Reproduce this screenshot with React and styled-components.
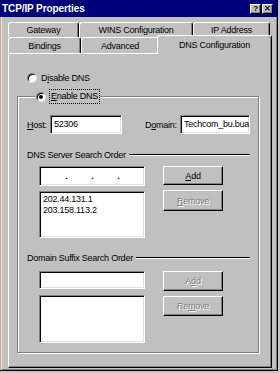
import React from 'react'
import styled, { createGlobalStyle } from 'styled-components'

const FONT = `"Liberation Sans", Arial, sans-serif`

const GlobalStyle = createGlobalStyle`
  html, body {
    margin: 0;
    padding: 0;
    background: #c8c8c8;
  }
  body {
    font-family: ${FONT};
    font-size: 9px;
    letter-spacing: -0.25px;
    color: #000;
  }
`

const Frame = styled.div`
  width: 278px;
  height: 371px;
  box-sizing: border-box;
  background: #c0c0c0;
  border-right: 1px solid #000;
  border-bottom: 1px solid #000;
  box-shadow: inset -1px -1px 0 #808080;
  display: flex;
  flex-direction: column;
  overflow: hidden;
`

const TitleBar = styled.div`
  height: 17px;
  background: #00007b;
  display: flex;
  align-items: center;
  padding: 0 4px 0 2px;
  flex-shrink: 0;
`

const Title = styled.div`
  flex: 1;
  color: #fff;
  font-weight: bold;
  font-size: 10px;
  letter-spacing: -0.1px;
`

const CapButton = styled.div`
  width: 11px;
  height: 10px;
  box-sizing: border-box;
  background: #c0c0c0;
  border: 1px solid;
  border-color: #fff #000 #000 #fff;
  box-shadow: inset -1px -1px 0 #808080;
  display: flex;
  align-items: center;
  justify-content: center;
  font-weight: bold;
  font-size: 8px;
  line-height: 1;
  margin-left: ${p => p.$gap || 0}px;
`

const Body = styled.div`
  flex: 1;
  border-left: 1px solid #d4a090;
  box-shadow: inset 1px 0 0 #e8e8e8;
  padding: 5px 5px 0 7px;
  display: flex;
  flex-direction: column;
`

const TabRow = styled.div`
  display: flex;
  height: ${p => p.$h}px;
`

const Tab = styled.div`
  box-sizing: border-box;
  width: ${p => p.$w}px;
  height: ${p => p.$h}px;
  background: #c0c0c0;
  border-top: 1px solid #fff;
  border-left: 1px solid #fff;
  border-right: 1px solid #000;
  box-shadow: inset -1px 0 0 #808080;
  border-radius: 3px 3px 0 0;
  display: flex;
  align-items: center;
  justify-content: center;
  ${p => p.$active && `
    position: relative;
    z-index: 1;
    margin: -2px -2px 0 -2px;
    width: ${p.$w + 4}px;
  `}
`

const Panel = styled.div`
  width: 264px;
  height: 315px;
  box-sizing: border-box;
  border: 1px solid;
  border-color: #fff #000 #000 #fff;
  box-shadow: inset -1px -1px 0 #808080;
  padding-top: 17px;
  display: flex;
  flex-direction: column;
`

const RadioLine = styled.label`
  display: flex;
  align-items: center;
  height: 13px;
  padding-left: 18px;
`

const RadioDot = styled.span`
  width: 10px;
  height: 10px;
  box-sizing: border-box;
  border-radius: 50%;
  background: #fff;
  border: 1px solid;
  border-color: #808080 #e0e0e0 #e0e0e0 #808080;
  box-shadow: inset 1px 1px 0 #000;
  display: flex;
  align-items: center;
  justify-content: center;
  margin-right: 4px;
  flex-shrink: 0;
  &::after {
    content: '';
    width: 4px;
    height: 4px;
    border-radius: 50%;
    background: ${p => (p.$checked ? '#000' : 'transparent')};
  }
`

const FocusText = styled.span`
  outline: 1px dotted #000;
  outline-offset: 0;
  padding: 1px 1px;
  line-height: 11px;
`

const Group = styled.fieldset`
  margin: 6px 12px 0 8px;
  padding: 12px 0 10px 9px;
  border: 1px solid #808080;
  box-shadow: 1px 1px 0 #fff, inset 1px 1px 0 #fff;
  min-width: 0;
  height: 263px;
  box-sizing: border-box;
  display: flex;
  flex-direction: column;
`

const Legend = styled.legend`
  padding: 0 1px;
  margin-left: 8px;
  background: #c0c0c0;
  display: flex;
  align-items: center;
  & > ${RadioLine} {
    padding-left: 0;
  }
`

const Row = styled.div`
  display: flex;
  align-items: ${p => p.$align || 'center'};
  margin-top: ${p => p.$mt || 0}px;
  padding-left: ${p => p.$indent || 0}px;
`

const Label = styled.span`
  width: ${p => p.$w}px;
  margin-left: ${p => p.$ml || 0}px;
  flex-shrink: 0;
`

const Field = styled.div`
  width: ${p => p.$w}px;
  height: ${p => p.$h || 19}px;
  box-sizing: border-box;
  background: #fff;
  border: 1px solid;
  border-color: #808080 #fff #fff #808080;
  box-shadow: inset 1px 1px 0 #000, inset -1px -1px 0 #e0e0e0;
  padding: 2px 3px;
  white-space: nowrap;
  overflow: hidden;
  flex-shrink: 0;
  display: flex;
  align-items: ${p => (p.$list ? 'flex-start' : 'center')};
  flex-direction: ${p => (p.$list ? 'column' : 'row')};
  line-height: 11px;
`

const IpField = styled(Field)`
  padding: 0;
  display: grid;
  grid-template-columns: 23px 3px 23px 3px 23px 3px 23px;
  justify-content: start;
  padding-left: 2px;
`

const Dot = styled.span`
  text-align: center;
  font-weight: bold;
`

const SectionHead = styled.div`
  display: flex;
  align-items: center;
  height: 12px;
  margin-top: ${p => p.$mt}px;
  margin-right: 8px;
`

const Rule = styled.div`
  flex: 1;
  margin-left: 3px;
  border-top: 1px solid #000;
  border-bottom: 1px solid #fff;
`

const Button = styled.div`
  width: 60px;
  height: ${p => p.$h || 20}px;
  box-sizing: border-box;
  margin-left: 18px;
  background: #c0c0c0;
  border: 1px solid;
  border-color: #fff #000 #000 #fff;
  box-shadow: inset -1px -1px 0 #808080;
  display: flex;
  align-items: center;
  justify-content: center;
  color: ${p => (p.$disabled ? '#808080' : '#000')};
  text-shadow: ${p => (p.$disabled ? '1px 1px 0 #fff' : 'none')};
  flex-shrink: 0;
`

const Stack = styled.div`
  display: flex;
  flex-direction: column;
`

export default function App() {
  return (
    <>
      <GlobalStyle />
      <Frame>
        <TitleBar>
          <Title>TCP/IP Properties</Title>
          <CapButton>?</CapButton>
          <CapButton $gap={1}>✕</CapButton>
        </TitleBar>
        <Body>
          <TabRow $h={15}>
            <Tab $w={71} $h={15}>Gateway</Tab>
            <Tab $w={114} $h={15}>WINS Configuration</Tab>
            <Tab $w={77} $h={15}>IP Address</Tab>
          </TabRow>
          <TabRow $h={16}>
            <Tab $w={73} $h={16}>Bindings</Tab>
            <Tab $w={78} $h={16}>Advanced</Tab>
            <Tab $w={111} $h={19} $active>DNS Configuration</Tab>
          </TabRow>
          <Panel>
            <RadioLine>
              <RadioDot />
              <span>D<u>i</u>sable DNS</span>
            </RadioLine>
            <Group>
              <Legend>
                <RadioLine>
                  <RadioDot $checked />
                  <FocusText><u>E</u>nable DNS</FocusText>
                </RadioLine>
              </Legend>
              <Row>
                <Label $w={23}><u>H</u>ost:</Label>
                <Field $w={72}>52306</Field>
                <Label $w={35} $ml={23}>D<u>o</u>main:</Label>
                <Field $w={70}>Techcom_bu.bua</Field>
              </Row>

              <SectionHead $mt={15}>
                DNS Server Search Order
                <Rule />
              </SectionHead>
              <Row $mt={5} $indent={12} $align="flex-start">
                <Stack>
                  <IpField $w={106} $h={20}>
                    <span />
                    <Dot>.</Dot>
                    <span />
                    <Dot>.</Dot>
                    <span />
                    <Dot>.</Dot>
                    <span />
                  </IpField>
                  <Field $w={106} $h={47} $list style={{ marginTop: 5 }}>
                    <span>202.44.131.1</span>
                    <span>203.158.113.2</span>
                  </Field>
                </Stack>
                <Stack>
                  <Button $h={19}><u>A</u>dd</Button>
                  <Button $h={21} $disabled style={{ marginTop: 5 }}>
                    <u>R</u>emove
                  </Button>
                </Stack>
              </Row>

              <SectionHead $mt={14}>
                Domain Suffix Search Order
                <Rule />
              </SectionHead>
              <Row $mt={7} $indent={12} $align="flex-start">
                <Stack>
                  <Field $w={106} $h={18} />
                  <Field $w={106} $h={48} $list style={{ marginTop: 6 }} />
                </Stack>
                <Stack>
                  <Button $h={20} $disabled>A<u>d</u>d</Button>
                  <Button $h={20} $disabled style={{ marginTop: 5 }}>
                    Re<u>m</u>ove
                  </Button>
                </Stack>
              </Row>
            </Group>
          </Panel>
        </Body>
      </Frame>
    </>
  )
}
